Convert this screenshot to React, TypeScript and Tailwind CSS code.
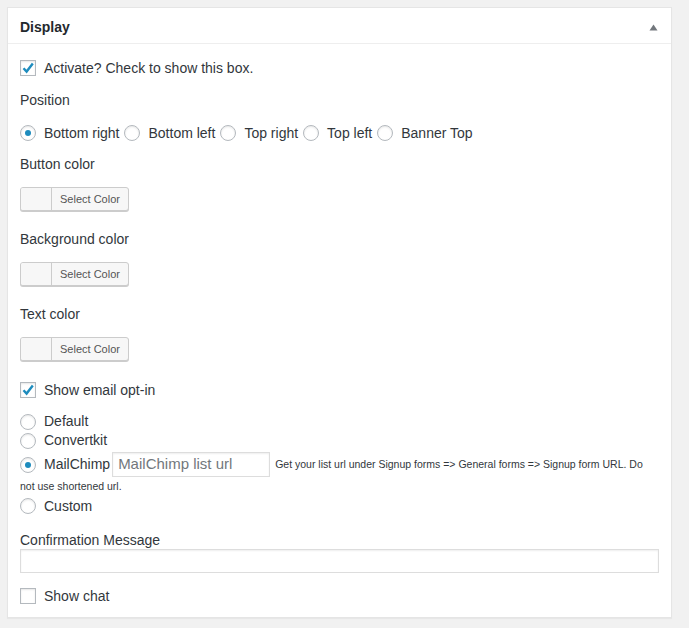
import { FC, ReactNode } from "react";

const Check: FC<{ checked?: boolean }> = ({ checked }) => (
    <span className="w-4 h-4 shrink-0 border border-[#b4b9be] bg-white shadow-[inset_0_1px_2px_rgba(0,0,0,0.1)] flex items-center justify-center">
        {checked && (
            <svg width="14" height="14" viewBox="0 0 14 14">
                <path d="M2.5 7.2 L5.6 10.6 L11.8 2.6" fill="none" stroke="#1e8cbe" strokeWidth="2.4" strokeLinejoin="miter" />
            </svg>
        )}
    </span>
);

const Radio: FC<{ checked?: boolean }> = ({ checked }) => (
    <span className="w-4 h-4 shrink-0 rounded-full border border-[#b4b9be] bg-white shadow-[inset_0_1px_2px_rgba(0,0,0,0.1)] flex items-center justify-center">
        {checked && <span className="w-[6px] h-[6px] rounded-full bg-[#1e8cbe]" />}
    </span>
);

const ColorButton: FC = () => (
    <div className="flex h-6 w-[109px] rounded-[3px] border border-[#ccc] bg-[#f7f7f7] shadow-[0_1px_0_#ccc] overflow-hidden">
        <span className="w-[31px] border-r border-[#ccc] bg-[#f7f7f7]" />
        <span className="flex-1 flex items-center justify-center text-[11px] text-[#555]">Select Color</span>
    </div>
);

const Label: FC<{ children: ReactNode; className?: string }> = ({ children, className = "" }) => (
    <div className={`h-5 flex items-center ${className}`}>{children}</div>
);

const positions = ["Bottom right", "Bottom left", "Top right", "Top left", "Banner Top"];

export default function App() {
    return (
        <div className="min-h-[628px] bg-[#f1f1f1] pt-[7px] pl-[7px] pr-[17px] pb-[10px] font-['Liberation_Sans',Arial,sans-serif] text-[14px] text-[#32373c]">
            <div className="w-[665px] bg-white border border-[#e5e5e5] shadow-[0_1px_1px_rgba(0,0,0,0.04)]">
                <div className="h-[36px] border-b border-[#eee] flex items-center justify-between pl-[12px] pr-[12px] pt-[3px]">
                    <h2 className="font-bold text-[14px] text-[#23282d]">Display</h2>
                    <svg width="9" height="7" viewBox="0 0 9 7" className="mr-[1px]">
                        <path d="M4.5 0.5 L8.5 6.5 L0.5 6.5 Z" fill="#72777c" />
                    </svg>
                </div>
                <div className="px-[12px] pt-[12px] pb-[9px] flex flex-col">
                    <div className="h-6 flex items-center gap-2">
                        <Check checked />
                        <span>Activate? Check to show this box.</span>
                    </div>
                    <Label className="mt-[10px]">Position</Label>
                    <div className="mt-[13px] h-5 flex items-center">
                        {positions.map((p, i) => (
                            <div key={p} className="flex items-center">
                                <Radio checked={i === 0} />
                                <span className="ml-2 mr-[5px]">{p}</span>
                            </div>
                        ))}
                    </div>
                    <Label className="mt-[11px]">Button color</Label>
                    <div className="mt-[13px]"><ColorButton /></div>
                    <Label className="mt-[18px]">Background color</Label>
                    <div className="mt-[13px]"><ColorButton /></div>
                    <Label className="mt-[18px]">Text color</Label>
                    <div className="mt-[13px]"><ColorButton /></div>
                    <div className="mt-[17px] h-6 flex items-center gap-2">
                        <Check checked />
                        <span>Show email opt-in</span>
                    </div>
                    <div className="mt-[10px] h-[19px] flex items-center gap-2">
                        <Radio />
                        <span>Default</span>
                    </div>
                    <div className="h-[19px] flex items-center gap-2">
                        <Radio />
                        <span>Convertkit</span>
                    </div>
                    <div className="mt-[2px] h-[25px] flex items-center whitespace-nowrap">
                        <Radio checked />
                        <span className="ml-2">MailChimp</span>
                        <div className="ml-[2px] w-[158px] h-[25px] border border-[#ddd] shadow-[inset_0_1px_2px_rgba(0,0,0,0.07)] flex items-center px-[5px] text-[15px] text-[#72777c]">
                            MailChimp list url
                        </div>
                        <span className="ml-[5px] text-[10.5px] text-[#32373c]">Get your list url under Signup forms =&gt; General forms =&gt; Signup form URL. Do</span>
                    </div>
                    <div className="h-[20px] flex items-center text-[10.5px]">not use shortened url.</div>
                    <div className="h-[18px] flex items-center gap-2">
                        <Radio />
                        <span>Custom</span>
                    </div>
                    <div className="mt-[16px] h-[18px] flex items-center">Confirmation Message</div>
                    <div className="h-6 w-[639px] border border-[#ddd] shadow-[inset_0_1px_2px_rgba(0,0,0,0.07)]" />
                    <div className="mt-[11px] h-6 flex items-center gap-2">
                        <Check />
                        <span>Show chat</span>
                    </div>
                </div>
            </div>
        </div>
    );
}
